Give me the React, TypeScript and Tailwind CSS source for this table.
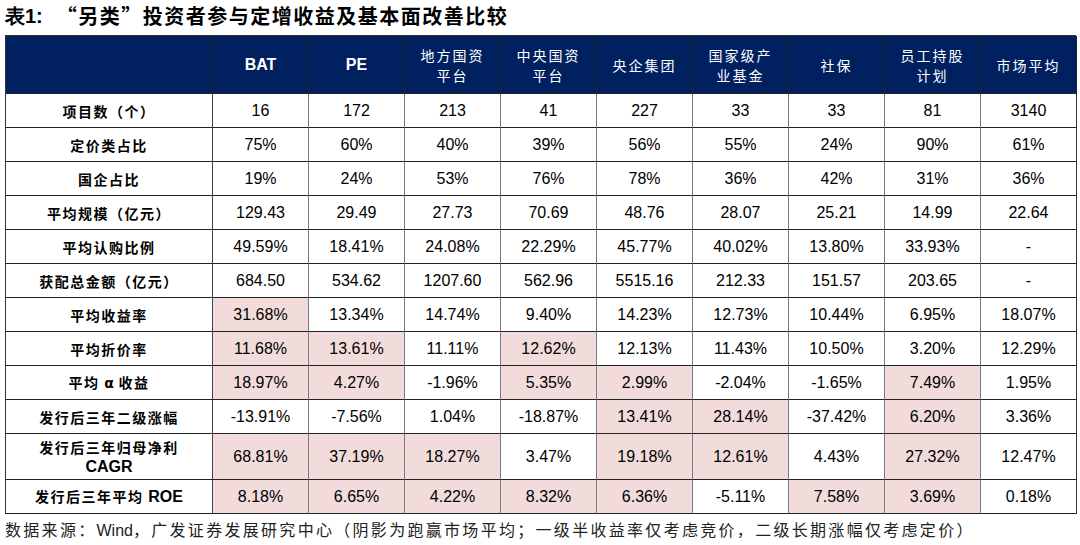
import React from "react";

const columns = [
  ["BAT"],
  ["PE"],
  ["地方国资", "平台"],
  ["中央国资", "平台"],
  ["央企集团"],
  ["国家级产", "业基金"],
  ["社保"],
  ["员工持股", "计划"],
  ["市场平均"],
];

interface Row {
  label: React.ReactNode;
  values: string[];
  shaded?: number[];
  tall?: boolean;
}

const rows: Row[] = [
  { label: "项目数（个）", values: ["16", "172", "213", "41", "227", "33", "33", "81", "3140"] },
  { label: "定价类占比", values: ["75%", "60%", "40%", "39%", "56%", "55%", "24%", "90%", "61%"] },
  { label: "国企占比", values: ["19%", "24%", "53%", "76%", "78%", "36%", "42%", "31%", "36%"] },
  { label: "平均规模（亿元）", values: ["129.43", "29.49", "27.73", "70.69", "48.76", "28.07", "25.21", "14.99", "22.64"] },
  { label: "平均认购比例", values: ["49.59%", "18.41%", "24.08%", "22.29%", "45.77%", "40.02%", "13.80%", "33.93%", "-"] },
  { label: "获配总金额（亿元）", values: ["684.50", "534.62", "1207.60", "562.96", "5515.16", "212.33", "151.57", "203.65", "-"] },
  {
    label: "平均收益率",
    values: ["31.68%", "13.34%", "14.74%", "9.40%", "14.23%", "12.73%", "10.44%", "6.95%", "18.07%"],
    shaded: [0],
  },
  {
    label: "平均折价率",
    values: ["11.68%", "13.61%", "11.11%", "12.62%", "12.13%", "11.43%", "10.50%", "3.20%", "12.29%"],
    shaded: [0, 1, 3],
  },
  {
    label: (
      <>
        平均 <span className="font-['DejaVu_Sans'] font-bold tracking-normal">α</span> 收益
      </>
    ),
    values: ["18.97%", "4.27%", "-1.96%", "5.35%", "2.99%", "-2.04%", "-1.65%", "7.49%", "1.95%"],
    shaded: [0, 1, 3, 4, 7],
  },
  {
    label: "发行后三年二级涨幅",
    values: ["-13.91%", "-7.56%", "1.04%", "-18.87%", "13.41%", "28.14%", "-37.42%", "6.20%", "3.36%"],
    shaded: [4, 5, 7],
  },
  {
    label: (
      <>
        <div>发行后三年归母净利</div>
        <div className="font-['Liberation_Sans'] tracking-normal text-[16px]">CAGR</div>
      </>
    ),
    values: ["68.81%", "37.19%", "18.27%", "3.47%", "19.18%", "12.61%", "4.43%", "27.32%", "12.47%"],
    shaded: [0, 1, 2, 4, 5, 7],
    tall: true,
  },
  {
    label: (
      <>
        发行后三年平均 <span className="font-['Liberation_Sans'] tracking-normal text-[16px]">ROE</span>
      </>
    ),
    values: ["8.18%", "6.65%", "4.22%", "8.32%", "6.36%", "-5.11%", "7.58%", "3.69%", "0.18%"],
    shaded: [0, 1, 2, 3, 4, 6, 7],
  },
];

const cjk = "font-['Noto_Sans_CJK_SC',sans-serif]";

export default function App() {
  return (
    <div className="w-[1080px] h-[545px] bg-white pl-[5px] font-['Liberation_Sans','Noto_Sans_CJK_SC',sans-serif] text-black">
      <div className="h-[35px] flex items-center pb-[3px] text-[20px] font-bold">
        <span className="font-['Liberation_Sans']">表1:</span>
        <span className={`${cjk} ml-[14px] tracking-[1.5px] font-semibold`}>“另类”投资者参与定增收益及基本面改善比较</span>
      </div>

      <div className="grid grid-cols-[207px_repeat(9,96px)] border-t border-l border-[#333] w-[1071px]">
        <div className="h-[58px] bg-[#002060] border-r border-b border-[#222]" />
        {columns.map((c, i) => (
          <div
            key={i}
            className={`h-[58px] bg-[#002060] border-r border-b border-[#222] flex flex-col items-center justify-center text-white ${
              /^[A-Z]+$/.test(c[0])
                ? "font-bold text-[16px]"
                : `${cjk} text-[14px] tracking-[2px] leading-[20px]`
            }`}
          >
            {c.map((t) => (
              <span key={t}>{t}</span>
            ))}
          </div>
        ))}

        {rows.map((r, ri) => (
          <React.Fragment key={ri}>
            <div
              className={`${r.tall ? "h-[46px]" : "h-[34px]"} border-r border-b border-r-[#444] border-b-[#222] flex items-center justify-center ${cjk} font-bold text-[14px] tracking-[1.5px] leading-[20px]`}
            >
              <div className="text-center">{r.label}</div>
            </div>
            {r.values.map((v, vi) => (
              <div
                key={vi}
                className={`${r.tall ? "h-[46px]" : "h-[34px]"} border-r border-b border-r-[#7a7a7a] border-b-[#222] flex items-center justify-center text-[16px] ${
                  r.shaded?.includes(vi) ? "bg-[#f2dcdb]" : "bg-white"
                } ${vi === 8 ? "border-r-[#333]" : ""}`}
              >
                {v}
              </div>
            ))}
          </React.Fragment>
        ))}
      </div>

      <div className={`mt-[4px] ${cjk} text-[16px] tracking-[2.3px] text-[#222] leading-[22px]`}>
        数据来源：<span className="font-['Liberation_Sans'] tracking-normal">Wind</span>，广发证券发展研究中心（阴影为跑赢市场平均；一级半收益率仅考虑竞价，二级长期涨幅仅考虑定价）
      </div>
    </div>
  );
}
